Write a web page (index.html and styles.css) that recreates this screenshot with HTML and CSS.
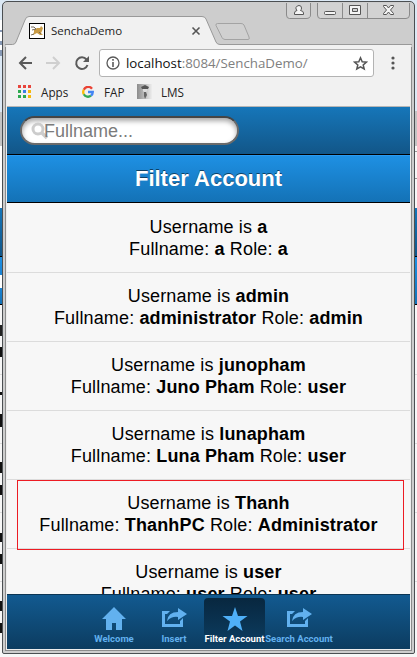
FILE: index.html
```html
<!DOCTYPE html>
<html lang="en">
<head>
    <meta charset="UTF-8">
    <meta name="viewport" content="width=device-width, initial-scale=1.0">
    <title>SenchaDemo</title>
    <link rel="stylesheet" href="styles.css">
</head>
<body>
    <div class="desktop">
        <div class="side side-left"></div>
        <div class="window">
            <!-- Tab strip -->
            <div class="tab-strip">
                <svg class="strip-shape" width="411" height="43" viewBox="0 0 411 43">
                    <path d="M3 43V41.500H9.500Q12 41.500 13 39L22 17Q23 13.500 26 13.500H199Q202 13.500 203 16L213 39Q214 41.500 217 41.500H408V43Z" fill="#f1f1f1"/>
                    <path d="M2 41.500H9.500Q12 41.500 13 39L22 17Q23 13.500 26 13.500H199Q202 13.500 203 16L213 39Q214 41.500 217 41.500H409" fill="none" stroke="#999"/>
                    <path d="M214.500 20.500H238Q240 20.500 241 22L246 34Q247 36.500 245 36.500H222Q220 36.500 219 34.500L213 22.500Q212.500 20.500 214.500 20.500Z" fill="#d0d0d0" stroke="#a3a3a3"/>
                    <g fill="#d2d2d2" stroke="#8a8a8a">
                        <path d="M283.500 -1V12Q283.500 15.500 286.500 15.500H303Q307.500 15.500 307.500 12V-1"/>
                        <path d="M314.500 -1V12Q314.500 15.500 317.500 15.500H403Q406.500 15.500 406.500 12V-1"/>
                        <path d="M339.500 -1V15M364.500 -1V15"/>
                    </g>
                    <g fill="#f4f4f4" stroke="#555">
                        <path d="M291.500 11.500V10Q291.500 8 294 7.500Q292.500 6 293 4.500Q294 2.500 296 2.500Q298.500 2.500 298.500 5Q298.500 6.500 297.500 7.500Q300.500 8 300.500 10V11.500Z"/>
                        <rect x="321.500" y="8.500" width="11" height="3" rx="1"/>
                        <path fill-rule="evenodd" d="M346.500 2.500H357.500V11.500H346.500ZM349.500 5.500V8.500H354.500V5.500Z"/>
                        <path d="M380.500 2.500H383.500L385.500 5L387.500 2.500H390.500V3.500L387.500 7L390.500 10.500V11.500H387.500L385.500 9L383.500 11.500H380.500V10.500L383.500 7L380.500 3.500Z"/>
                    </g>
                </svg>
                <div class="tab">
                    <svg class="tab-icon" width="16" height="16" viewBox="0 0 16 16">
                        <rect x=".5" y=".5" width="15" height="15" fill="#fff" stroke="#000"/>
                        <path d="M5 7L8 5L11 5L12 3L14 5L13 8L12 10L14 12H11L8 10L4 12L5 9Z" fill="#c99b45"/>
                        <path d="M2 4L5 4L7 6L3 7M10 9L12 11M2 12L5 11" fill="none" stroke="#766b58"/>
                    </svg>
                    <span class="tab-title">SenchaDemo</span>
                    <svg class="tab-close" width="10" height="10" viewBox="0 0 10 10"><path d="M1.500 1.500L8.500 8.500M8.500 1.500L1.500 8.500" stroke="#555" stroke-width="1.600"/></svg>
                </div>
            </div>

            <div class="page">
                <!-- Address bar -->
                <div class="toolbar">
                    <svg class="nav-icons" width="72" height="16" viewBox="0 0 72 16" fill="none" stroke-width="2">
                        <path d="M14 8H2M8 2L2 8L8 14" stroke="#5a5a5a"/>
                        <path d="M28 8H41M35 2L41 8L35 14" stroke="#cfcfcf"/>
                        <path d="M68.500 4.500A5.800 5.800 0 1 0 69.500 10" stroke="#5a5a5a"/>
                        <path d="M71 1V7H65Z" fill="#5a5a5a"/>
                    </svg>
                    <div class="address">
                        <svg width="14" height="14" viewBox="0 0 14 14">
                            <circle cx="7" cy="7" r="6" fill="none" stroke="#5a5a5a" stroke-width="1.300"/>
                            <path d="M7 3V4.700M7 6V11" stroke="#5a5a5a" stroke-width="1.600"/>
                        </svg>
                        <span class="url"><b>localhost</b>:8084/SenchaDemo/</span>
                        <svg class="star" width="15" height="15" viewBox="0 0 15 15"><path d="M7.500 1.800L9.200 5.700L13.400 6.100L10.200 8.900L11.200 13L7.500 10.800L3.800 13L4.800 8.900L1.600 6.100L5.800 5.700Z" fill="none" stroke="#555" stroke-width="1.500"/></svg>
                    </div>
                    <svg class="menu-dots" width="4" height="14" viewBox="0 0 4 14" fill="#555"><circle cx="2" cy="2" r="1.600"/><circle cx="2" cy="7" r="1.600"/><circle cx="2" cy="12" r="1.600"/></svg>
                </div>

                <!-- Bookmarks -->
                <div class="bookmarks">
                    <svg width="13" height="13" viewBox="0 0 13 13">
                        <path d="M0 0H3V3H0ZM5 0H8V3H5ZM10 0H13V3H10Z" fill="#e8453c"/>
                        <path d="M0 5H3V8H0ZM0 10H3V13H0ZM5 10H8V13H5Z" fill="#2da94f"/>
                        <path d="M5 5H8V8H5Z" fill="#3c7ee8"/>
                        <path d="M10 5H13V8H10ZM10 10H13V13H10Z" fill="#f6b70b"/>
                    </svg>
                    <span class="bookmark-apps">Apps</span>
                    <svg width="12" height="12" viewBox="0 0 12 12" fill="none" stroke-width="2.300">
                        <path d="M10 2.700A4.800 4.800 0 0 0 1.800 3.700" stroke="#ea4335"/>
                        <path d="M1.800 3.700A4.800 4.800 0 0 0 1.800 8.300" stroke="#fbbc05"/>
                        <path d="M1.800 8.300A4.800 4.800 0 0 0 9 9.700" stroke="#34a853"/>
                        <path d="M9 9.700A4.800 4.800 0 0 0 10.800 6H6" stroke="#4285f4"/>
                    </svg>
                    <span class="bookmark-fap">FAP</span>
                    <svg width="15" height="15" viewBox="0 0 15 15">
                        <defs><linearGradient id="lms" x2="1"><stop stop-color="#8c8c8c"/><stop offset="1" stop-color="#ededed"/></linearGradient></defs>
                        <rect width="15" height="15" fill="url(#lms)"/>
                        <path d="M4 3L8 1L12 3L11 5H5Z" fill="#555"/>
                        <path d="M6 5H10V7L8 9L6 7Z" fill="#ddd"/>
                        <path d="M7 8L9 8L10 11L8 15L7 12Z" fill="#666"/>
                    </svg>
                    <span class="bookmark-lms">LMS</span>
                </div>

                <!-- App -->
                <div class="app">
                    <div class="search-bar">
                        <div class="search-field">
                            <svg width="18" height="18" viewBox="0 0 18 18" fill="none" stroke="#ccc"><circle cx="7" cy="7" r="5" stroke-width="3"/><path d="M10.500 10.500L16 16" stroke-width="3.500"/></svg>
                            <span>Fullname...</span>
                        </div>
                    </div>
                    <div class="title-bar">Filter Account</div>
                    <div class="list">
                        <div class="item">Username is <b>a</b><br>Fullname: <b>a</b> Role: <b>a</b></div>
                        <div class="item">Username is <b>admin</b><br>Fullname: <b>administrator</b> Role: <b>admin</b></div>
                        <div class="item">Username is <b>junopham</b><br>Fullname: <b>Juno Pham</b> Role: <b>user</b></div>
                        <div class="item">Username is <b>lunapham</b><br>Fullname: <b>Luna Pham</b> Role: <b>user</b></div>
                        <div class="item marked">Username is <b>Thanh</b><br>Fullname: <b>ThanhPC</b> Role: <b>Administrator</b></div>
                        <div class="item">Username is <b>user</b><br>Fullname: <b>user</b> Role: <b>user</b></div>
                    </div>
                    <div class="tab-bar">
                        <div class="nav-tab">
                            <svg width="26" height="26" viewBox="0 0 26 26"><path d="M13 1L25 13H21V24H15V17H11V24H5V13H1Z"/></svg>
                            <span>Welcome</span>
                        </div>
                        <div class="nav-tab">
                            <svg width="26" height="26" viewBox="0 0 26 26"><path d="M1 5H9L6 8H4V18H19V15L22 12V21H1Z"/><path d="M17 2L26 8L17 14V11Q11 10 6 15Q7 6 17 6Z"/></svg>
                            <span>Insert</span>
                        </div>
                        <div class="nav-tab active">
                            <svg width="26" height="26" viewBox="0 0 26 26"><path d="M13 1L16 10H25.500L18 15.500L20.500 25L13 19.500L5.500 25L8 15.500L.500 10H10Z"/></svg>
                            <span>Filter Account</span>
                        </div>
                        <div class="nav-tab wide">
                            <svg width="26" height="26" viewBox="0 0 26 26"><path d="M1 5H9L6 8H4V18H19V15L22 12V21H1Z"/><path d="M17 2L26 8L17 14V11Q11 10 6 15Q7 6 17 6Z"/></svg>
                            <span>Search Account</span>
                        </div>
                    </div>
                </div>
            </div>
        </div>
        <div class="side side-right"></div>
    </div>
</body>
</html>
```
FILE: styles.css
```css
* {
    box-sizing: border-box;
}

body {
    margin: 0;
    font-family: "Liberation Sans", Arial, sans-serif;
    background-color: #f7f7f7;
    overflow: hidden;
}

svg {
    display: block;
    flex: none;
}

.desktop {
    display: flex;
    width: 417px;
    height: 657px;
    padding-top: 1px;
    background: linear-gradient(#dce9f5 0 10px, #f7f7f7 10px);
}

/* Windows behind the browser */
.side {
    width: 2px;
}

.side-left {
    background:
        linear-gradient(transparent 324px, #222 324px 335px, transparent 335px 346px, #111 346px 356px, transparent 356px 373px, #dcdcdc 373px 374px, transparent 374px 391px, #111 391px 394px, transparent 394px 413px, #111 413px 426px, transparent 426px 442px, #dcdcdc 442px 443px, transparent 443px 461px, #111 461px 472px, transparent 472px 484px, #111 484px 494px, transparent 494px 511px, #dcdcdc 511px 512px, transparent 512px 532px, #111 532px 541px, transparent 541px 553px, #111 553px 563px, transparent 563px 580px, #dcdcdc 580px 581px, transparent 581px 600px, #111 600px 610px, transparent 610px 622px, #111 622px 632px, transparent 632px),
        linear-gradient(#dce9f5 0 19px, #fff 19px 29px, #8799b5 29px 31px, #fff 31px 40px, #8799b5 40px 44px, #fff 44px 49px, #8799b5 49px 55px, #dce9f5 55px 111px, #c4c4c4 111px 145px, #fff 145px 207px, #1676b9 207px, #125688 255px, #000 255px 256px, #1e90e3 256px, #1b83d3 274px, #fff 274px 287px, #1b83d3 287px, #1472b6 303px, #000 303px 304px, #f7f7f7 304px);
}

.side-right {
    background: linear-gradient(#dce9f5 0 110px, #c4c4c4 110px 145px, #f7f7f7 145px 150px, #999 150px 151px, #f7f7f7 151px 177px, #999 177px 178px, #f7f7f7 178px 207px, #1676b9 207px, #125688 255px, #000 255px 256px, #1e90e3 256px, #1472b6 303px, #000 303px 304px, #f7f7f7 304px 373px, #dcdcdc 373px 374px, #f7f7f7 374px 442px, #dcdcdc 442px 443px, #f7f7f7 443px 511px, #dcdcdc 511px 512px, #f7f7f7 512px 580px, #dcdcdc 580px 581px, #f7f7f7 581px);
}

/* Browser window */
.window {
    width: 413px;
    height: 653px;
    padding: 0 4px 3px;
    border: 1px solid #4b4f52;
    border-radius: 5px 5px 2px 2px;
    background-color: #cdcdcd;
}

.tab-strip {
    position: relative;
    height: 43px;
    margin: 0 -4px;
}

.strip-shape {
    position: absolute;
    left: 0;
    top: 1px;
}

.tab {
    position: relative;
    display: flex;
    align-items: center;
    width: 200px;
    height: 43px;
    padding: 15px 2px 0 26px;
}

.tab-title,
.url,
.bookmarks {
    font-family: "Open Sans", "Noto Sans", sans-serif;
}

.tab-title {
    margin-left: 6px;
    padding-bottom: 1px;
    font-size: 11.5px;
    color: #222;
}

.tab-close {
    margin-left: auto;
}

.page {
    box-shadow: -1px 1px 0 #eee, 1px 1px 0 #eee, -2px 2px 0 #8c8c8c, 2px 2px 0 #8c8c8c;
}

.toolbar {
    display: flex;
    align-items: center;
    height: 36px;
    padding-left: 11px;
    background-color: #f1f1f1;
}

.address {
    display: flex;
    align-items: center;
    width: 275px;
    height: 28px;
    margin-left: 9px;
    padding: 0 5px 0 6px;
    border: 1px solid #b3b3b3;
    border-radius: 3px;
    background-color: #fff;
}

.url {
    margin-left: 6px;
    font-size: 13.3px;
    color: #808080;
}

.url b {
    font-weight: normal;
    color: #111;
}

.star {
    margin-left: auto;
}

.menu-dots {
    margin-left: 17px;
}

.bookmarks {
    display: flex;
    align-items: center;
    height: 25px;
    padding: 0 0 4px 11px;
    font-size: 11.7px;
    color: #222;
    background-color: #f1f1f1;
}

.bookmark-apps {
    width: 41px;
    margin-left: 10px;
}

.bookmark-fap {
    width: 33px;
    margin-left: 10px;
}

.bookmark-lms {
    margin-left: 9px;
}

/* App */
.app {
    display: flex;
    flex-direction: column;
    height: 543px;
    border-top: 1px solid #b6b6b6;
    background-color: #f7f7f7;
}

.search-bar {
    height: 48px;
    flex: none;
    padding: 9px 13px;
    border-bottom: 1px solid #000;
    background: linear-gradient(#1676b9, #125688);
}

.search-field {
    display: flex;
    align-items: center;
    width: 219px;
    height: 29px;
    padding: 1px 0 0 9px;
    border: 2px solid #6b6b6b;
    border-top-color: #454545;
    border-radius: 15px;
    background-color: #fff;
    box-shadow: inset 0 3px 5px rgba(0, 0, 0, 0.35);
    font-size: 18px;
    color: #7b7b7b;
}

.search-field span {
    margin-left: -5px;
}

.title-bar {
    height: 48px;
    flex: none;
    border-top: 1px solid #2a9af0;
    border-bottom: 1px solid #000;
    background: linear-gradient(#1e90e3, #1472b6);
    color: #fff;
    font-size: 22px;
    font-weight: bold;
    line-height: 46px;
    text-align: center;
    text-shadow: 0 -1px 0 #0d4166;
}

.list {
    flex: 1;
    padding-top: 1px;
    overflow: hidden;
}

.item {
    height: 69px;
    padding-top: 12px;
    border-bottom: 1px solid #dcdcdc;
    color: #000;
    font-size: 18px;
    letter-spacing: 0.14px;
    line-height: 22px;
    text-align: center;
}

/* Highlight frame over a row */
.marked {
    position: relative;
}

.marked::after {
    content: "";
    position: absolute;
    left: 10px;
    top: 0;
    width: 385px;
    height: 68px;
    border: 1px solid #ed1c24;
}

/* Bottom navigation */
.tab-bar {
    display: flex;
    flex: none;
    justify-content: center;
    height: 55px;
    padding-top: 3px;
    border-top: 1px solid #0b3553;
    background: linear-gradient(#125a90, #0c3c60);
}

.nav-tab {
    display: flex;
    flex-direction: column;
    align-items: center;
    width: 60px;
    height: 47px;
    padding-top: 8px;
    border-radius: 4px;
    color: #62b1ef;
    fill: #62b1ef;
    font-family: Roboto, "Liberation Sans", sans-serif;
    font-size: 9.5px;
    font-weight: bold;
    line-height: 13px;
    white-space: nowrap;
}

.active {
    width: 61px;
    color: #fff;
    fill: #4fb0f8;
    background: linear-gradient(#08273f, #0c3d61);
}

.wide {
    width: 68px;
}
```
